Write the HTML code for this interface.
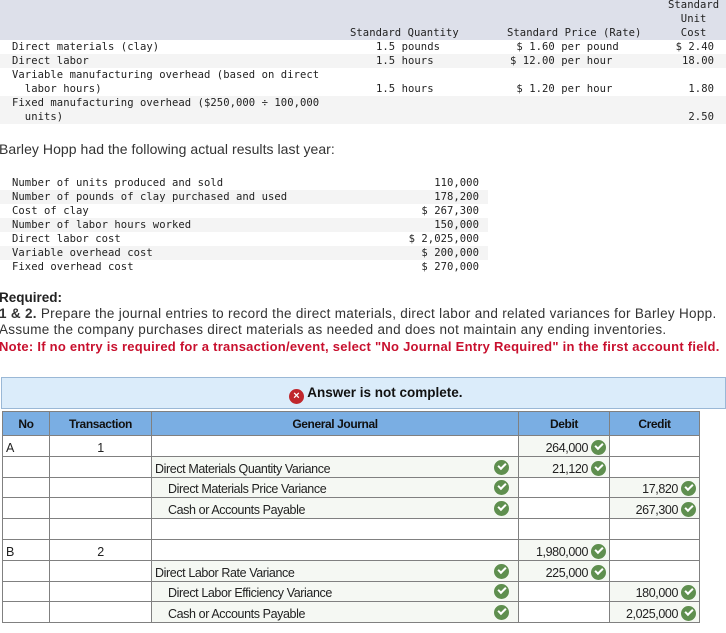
<!DOCTYPE html>
<html><head><meta charset="utf-8"><style>
*{margin:0;padding:0;box-sizing:border-box}
body{width:726px;height:633px;background:#fff;position:relative;overflow:hidden;font-family:"Liberation Sans",sans-serif;color:#222}
.m{font-family:"DejaVu Sans Mono","Liberation Mono",monospace;font-size:10.55px;position:absolute;white-space:pre;line-height:14px;color:#222;letter-spacing:0.05px}
.band{position:absolute;left:0}
.r{text-align:right}
.c{text-align:center}
.s{position:absolute;white-space:nowrap}
table{position:absolute;left:2px;top:411px;border-collapse:collapse;font-size:12.5px}
td,th{border:1px solid #808080;height:20.8px;padding:0 3px;white-space:nowrap}
th{background:#7aaee3;height:24px;font-weight:bold;font-size:12px;color:#111;letter-spacing:-0.4px}
td{vertical-align:bottom;padding-bottom:1px;letter-spacing:-0.4px}
.g{background:#f5f8f3}
.ck{display:inline-block;width:15px;height:15px;border-radius:50%;background:#5f8f4f;vertical-align:-3px;position:relative;margin-left:3px}
.ck:after{content:"";position:absolute;left:4px;top:3px;width:6px;height:3px;border-left:2px solid #fff;border-bottom:2px solid #fff;transform:rotate(-45deg)}
.gj .ck{position:absolute;right:9px;bottom:2px}
.gj{position:relative}
</style></head><body>
<div class="band" style="top:0;width:726px;height:40px;background:#dde0ea"></div>
<div class="band" style="top:54px;width:726px;height:14px;background:#f4f4f4"></div>
<div class="band" style="top:96px;width:726px;height:28px;background:#f4f4f4"></div>
<div class="m" style="left:668px;top:-2px;width:56px" >Standard
  Unit
  Cost</div>
<div class="m" style="left:350px;top:26px">Standard Quantity</div>
<div class="m" style="left:507px;top:26px">Standard Price (Rate)</div>
<div class="m" style="left:12px;top:40px">Direct materials (clay)
Direct labor
Variable manufacturing overhead (based on direct
  labor hours)
Fixed manufacturing overhead ($250,000 ÷ 100,000
  units)</div>
<div class="m" style="left:376px;top:40px">1.5 pounds
1.5 hours

1.5 hours</div>
<div class="m" style="left:510px;top:40px"> $ 1.60 per pound
$ 12.00 per hour

 $ 1.20 per hour</div>
<div class="m r" style="left:640px;top:40px;width:74px">$ 2.40
18.00

1.80

2.50</div>

<div class="s" style="left:-1px;top:141px;font-size:14px;color:#333;letter-spacing:0.05px">Barley Hopp had the following actual results last year:</div>

<div class="band" style="top:190px;width:488px;height:14px;background:#f4f4f4"></div>
<div class="band" style="top:218px;width:488px;height:14px;background:#f4f4f4"></div>
<div class="band" style="top:246px;width:488px;height:14px;background:#f4f4f4"></div>
<div class="m" style="left:12px;top:176px">Number of units produced and sold
Number of pounds of clay purchased and used
Cost of clay
Number of labor hours worked
Direct labor cost
Variable overhead cost
Fixed overhead cost</div>
<div class="m r" style="left:380px;top:176px;width:99px">110,000
178,200
$ 267,300
150,000
$ 2,025,000
$ 200,000
$ 270,000</div>

<div class="s" style="left:-1px;top:290px;font-size:13.5px;font-weight:bold;color:#222">Required:</div>
<div class="s" style="left:-1px;top:306px;font-size:13.5px;color:#333;letter-spacing:0.3px"><b>1 &amp; 2.</b> Prepare the journal entries to record the direct materials, direct labor and related variances for Barley Hopp.</div>
<div class="s" style="left:-1px;top:322px;font-size:13.5px;color:#333;letter-spacing:0.3px">Assume the company purchases direct materials as needed and does not maintain any ending inventories.</div>
<div class="s" style="left:-1px;top:339px;font-size:13px;font-weight:bold;color:#c8102e;letter-spacing:0.25px">Note: If no entry is required for a transaction/event, select "No Journal Entry Required" in the first account field.</div>

<div style="position:absolute;left:1px;top:377px;width:725px;height:32px;background:#dbecfa;border:1px solid #9ab8d6"></div>
<div class="s" style="left:289px;top:385px;font-size:13.5px;font-weight:bold;color:#111"><span style="display:inline-block;width:15px;height:15px;border-radius:50%;background:#c0272d;color:#fff;font-size:11px;line-height:15px;text-align:center;vertical-align:-2px">×</span> Answer is not complete.</div>

<table>
<tr><th style="width:47px">No</th><th style="width:102px">Transaction</th><th style="width:367px">General Journal</th><th style="width:91px">Debit</th><th style="width:90px">Credit</th></tr>
<tr><td>A</td><td class="c">1</td><td></td><td class="r g">264,000<span class="ck"></span></td><td></td></tr>
<tr><td></td><td></td><td class="g gj">Direct Materials Quantity Variance<span class="ck"></span></td><td class="r g">21,120<span class="ck"></span></td><td></td></tr>
<tr><td></td><td></td><td class="g gj" style="padding-left:16px">Direct Materials Price Variance<span class="ck"></span></td><td></td><td class="r g">17,820<span class="ck"></span></td></tr>
<tr><td></td><td></td><td class="g gj" style="padding-left:16px">Cash or Accounts Payable<span class="ck"></span></td><td></td><td class="r g">267,300<span class="ck"></span></td></tr>
<tr><td></td><td></td><td></td><td></td><td></td></tr>
<tr><td>B</td><td class="c">2</td><td></td><td class="r g">1,980,000<span class="ck"></span></td><td></td></tr>
<tr><td></td><td></td><td class="g gj">Direct Labor Rate Variance<span class="ck"></span></td><td class="r g">225,000<span class="ck"></span></td><td></td></tr>
<tr><td></td><td></td><td class="g gj" style="padding-left:16px">Direct Labor Efficiency Variance<span class="ck"></span></td><td></td><td class="r g">180,000<span class="ck"></span></td></tr>
<tr><td></td><td></td><td class="g gj" style="padding-left:16px">Cash or Accounts Payable<span class="ck"></span></td><td></td><td class="r g">2,025,000<span class="ck"></span></td></tr>
</table>
</body></html>
